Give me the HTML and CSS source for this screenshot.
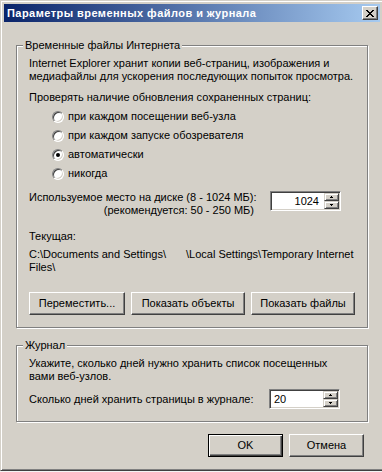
FILE: index.html
```html
<!DOCTYPE html>
<html lang="ru">
<head>
  <meta charset="UTF-8">
  <meta name="viewport" content="width=device-width, initial-scale=1.0">
  <title>Параметры временных файлов и журнала</title>
  <link rel="stylesheet" href="styles.css">
</head>
<body>
  <div class="window">
    <div class="titlebar">
      <span class="title-text">Параметры временных файлов и журнала</span>
      <span class="title-close">
        <svg width="8" height="7" viewBox="0 0 8 7" shape-rendering="crispEdges">
          <path d="M0 0h2v1h-2z M6 0h2v1h-2z M1 1h2v1h-2z M5 1h2v1h-2z M2 2h4v1h-4z M3 3h2v1h-2z M2 4h4v1h-4z M1 5h2v1h-2z M5 5h2v1h-2z M0 6h2v1h-2z M6 6h2v1h-2z" fill="#000"/>
        </svg>
      </span>
    </div>

    <div class="client">
      <div class="group">
        <div class="group-title">Временные файлы Интернета</div>
        <p class="text intro">Internet Explorer хранит копии веб-страниц, изображения и<br>медиафайлы для ускорения последующих попыток просмотра.</p>
        <p class="text check-label">Проверять наличие обновления сохраненных страниц:</p>
        <ul class="radio-list">
          <li class="radio-row"><span class="radio"></span>при каждом посещении веб-узла</li>
          <li class="radio-row"><span class="radio"></span>при каждом запуске обозревателя</li>
          <li class="radio-row"><span class="radio radio-checked"></span>автоматически</li>
          <li class="radio-row"><span class="radio"></span>никогда</li>
        </ul>
        <div class="disk-row">
          <p class="text disk-label">Используемое место на диске (8 - 1024 МБ):<br>(рекомендуется: 50 - 250 МБ)</p>
          <div class="spin">
            <span class="spin-value spin-value-right">1024</span>
            <span class="spin-buttons">
              <span class="spin-btn"><svg width="3" height="2" viewBox="0 0 3 2" shape-rendering="crispEdges"><path d="M1 0h1v1h-1z M0 1h3v1h-3z" fill="#000"/></svg></span>
              <span class="spin-btn"><svg width="3" height="2" viewBox="0 0 3 2" shape-rendering="crispEdges"><path d="M0 0h3v1h-3z M1 1h1v1h-1z" fill="#000"/></svg></span>
            </span>
          </div>
        </div>
        <p class="text current-label">Текущая:</p>
        <p class="text path">C:\Documents and Settings\<span class="user-gap"></span>\Local Settings\Temporary Internet<br>Files\</p>
        <div class="button-row">
          <button class="btn btn-move">Переместить...</button>
          <button class="btn btn-objects">Показать объекты</button>
          <button class="btn btn-files">Показать файлы</button>
        </div>
      </div>

      <div class="group group-history">
        <div class="group-title">Журнал</div>
        <p class="text intro">Укажите, сколько дней нужно хранить список посещенных<br>вами веб-узлов.</p>
        <div class="history-row">
          <p class="text history-label">Сколько дней хранить страницы в журнале:</p>
          <div class="spin">
            <span class="spin-value">20</span>
            <span class="spin-buttons">
              <span class="spin-btn"><svg width="3" height="2" viewBox="0 0 3 2" shape-rendering="crispEdges"><path d="M1 0h1v1h-1z M0 1h3v1h-3z" fill="#000"/></svg></span>
              <span class="spin-btn"><svg width="3" height="2" viewBox="0 0 3 2" shape-rendering="crispEdges"><path d="M0 0h3v1h-3z M1 1h1v1h-1z" fill="#000"/></svg></span>
            </span>
          </div>
        </div>
      </div>

      <div class="dialog-buttons">
        <button class="btn btn-dialog btn-default">OK</button>
        <button class="btn btn-dialog">Отмена</button>
      </div>
    </div>
  </div>
</body>
</html>
```

FILE: styles.css
```css
* {
  box-sizing: border-box;
}

html, body {
  margin: 0;
}

body {
  width: 382px;
  height: 472px;
  overflow: hidden;
  background-color: #f4f4f4;
  font-family: "Liberation Sans", Arial, sans-serif;
  font-size: 11px;
  line-height: 13px;
  color: #000;
}

/* window frame, classic 3d look */
.window {
  width: 384px;
  height: 471px;
  padding: 3px;
  background-color: #d4d0c8;
  border: 1px solid;
  border-color: #d4d0c8 #404040 #404040 #d4d0c8;
  box-shadow: inset 1px 1px #fff, inset -1px -1px #808080;
}

.titlebar {
  height: 18px;
  display: flex;
  align-items: center;
  justify-content: space-between;
  padding: 0 2px 0 3px;
  background: linear-gradient(to right, #0a246a, #a6caf0);
  color: #fff;
  font-weight: bold;
  letter-spacing: 0.45px;
}

.title-close {
  width: 16px;
  height: 14px;
  display: flex;
  align-items: center;
  justify-content: center;
  background-color: #d4d0c8;
  border: 1px solid;
  border-color: #fff #404040 #404040 #fff;
  box-shadow: inset -1px -1px #808080;
}

.client {
  padding: 23px 12px 0;
}

/* etched group box */
.group {
  border: 1px solid #808080;
  box-shadow: 1px 1px #fff, inset 1px 1px #fff;
  padding: 0 12px 12px;
}

.group-history {
  margin-top: 17px;
}

.group-title {
  width: fit-content;
  margin: -7px 0 0 -6px;
  padding: 0 2px;
  background-color: #d4d0c8;
}

.text {
  margin: 0;
}

.intro {
  margin-top: 5px;
}

.check-label {
  margin-top: 8px;
}

.radio-list {
  list-style: none;
  margin: 6px 0 0;
  padding: 0 0 0 23px;
  display: flex;
  flex-direction: column;
  gap: 6px;
}

.radio-row {
  display: flex;
  align-items: center;
  gap: 4px;
  height: 13px;
}

.radio {
  width: 12px;
  height: 12px;
  border-radius: 50%;
  background-color: #fff;
  border: 1px solid;
  border-color: #808080 #fff #fff #808080;
  box-shadow: inset 1px 1px #404040, inset -1px -1px #d4d0c8;
  display: flex;
  align-items: center;
  justify-content: center;
}

.radio-checked::after {
  content: "";
  width: 4px;
  height: 4px;
  border-radius: 50%;
  background-color: #000;
}

.disk-row {
  display: flex;
  align-items: flex-start;
  margin-top: 11px;
}

.disk-label {
  width: 225px;
  text-align: right;
  white-space: nowrap;
}

.disk-row .spin {
  margin-left: 16px;
}

/* spin box with up/down buttons */
.spin {
  width: 71px;
  height: 20px;
  display: flex;
  padding: 1px;
  background-color: #fff;
  border: 1px solid;
  border-color: #808080 #fff #fff #808080;
  box-shadow: inset 1px 1px #404040, inset -1px -1px #d4d0c8;
}

.spin-value {
  flex: 1;
  padding-left: 3px;
  line-height: 16px;
}

.spin-value-right {
  text-align: right;
  padding: 0 5px 0 0;
}

.spin-buttons {
  width: 15px;
  display: flex;
  flex-direction: column;
}

.spin-btn {
  height: 8px;
  display: flex;
  align-items: center;
  justify-content: center;
  background-color: #d4d0c8;
  border: 1px solid;
  border-color: #d4d0c8 #404040 #404040 #d4d0c8;
  box-shadow: inset 1px 1px #fff, inset -1px -1px #808080;
}

.current-label {
  margin-top: 13px;
}

.path {
  margin-top: 5px;
}

.user-gap {
  display: inline-block;
  width: 20px;
}

.button-row {
  display: flex;
  justify-content: space-between;
  margin-top: 18px;
}

.btn {
  height: 23px;
  padding: 0;
  font: inherit;
  color: #000;
  background-color: #d4d0c8;
  border: 1px solid;
  border-color: #fff #404040 #404040 #fff;
  box-shadow: inset -1px -1px #808080;
}

.btn-move {
  width: 96px;
}

.btn-objects {
  width: 114px;
}

.btn-files {
  width: 104px;
}

.history-row {
  display: flex;
  align-items: center;
  margin-top: 6px;
}

.history-label {
  flex: 1;
}

.history-row .spin {
  margin-right: 15px;
}

.dialog-buttons {
  display: flex;
  justify-content: flex-end;
  gap: 6px;
  margin: 12px 4px 0 0;
}

.btn-dialog {
  width: 75px;
}

.btn-default {
  border-color: #000;
  box-shadow: inset 1px 1px #fff, inset -1px -1px #404040, inset -2px -2px #808080;
}
```
